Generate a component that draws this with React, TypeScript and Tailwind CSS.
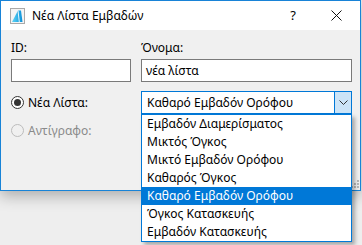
import React from "react";

const opcije = [
  "Εμβαδόν Διαμερίσματος",
  "Μικτός Όγκος",
  "Μικτό Εμβαδόν Ορόφου",
  "Καθαρός Όγκος",
  "Καθαρό Εμβαδόν Ορόφου",
  "Όγκος Κατασκευής",
  "Εμβαδόν Κατασκευής",
];

const selected = 4;

const AppIcon = () => (
  <svg width="15" height="16" viewBox="0 0 15 16">
    <defs>
      <linearGradient id="ic" x1="0" y1="0" x2="1" y2="0">
        <stop offset="0" stopColor="#5fd6f6" />
        <stop offset="1" stopColor="#0a8fd8" />
      </linearGradient>
    </defs>
    <rect x="0.5" y="0.5" width="14" height="15" fill="#f4f4f4" stroke="#a9a9a9" />
    <path d="M2 14 L8 2.5 L11 2.5 L12.5 14 Z" fill="url(#ic)" />
    <path d="M8 2.5 L9.3 14" stroke="#e8f8fd" strokeWidth="1" />
  </svg>
);

const Radio = ({ checked, disabled }: { checked?: boolean; disabled?: boolean }) => (
  <span
    className={`flex h-[13px] w-[13px] items-center justify-center rounded-full border ${
      disabled ? "border-[#bcbcbc] bg-[#f0f0f0]" : "border-[#333] bg-white"
    }`}
  >
    {checked && <span className="h-[7px] w-[7px] rounded-full bg-[#333]" />}
  </span>
);

export default function App() {
  return (
    <div
      className="h-[245px] w-[362px] overflow-hidden bg-[#eeeeee] text-[12px] text-black"
      style={{ fontFamily: '"Noto Sans", "Open Sans", sans-serif' }}
    >
      <div className="relative h-[191px] w-[361px] border border-[#1883d7] bg-[#f0f0f0] shadow-[0_5px_14px_rgba(0,0,0,0.28)]">
        {/* Title bar */}
        <div className="flex h-[29px] items-center bg-white">
          <div className="ml-[9px] mr-[7px] mt-[1px]">
            <AppIcon />
          </div>
          <span className="text-[12px]">Νέα Λίστα Εμβαδών</span>
          <span className="ml-auto mr-[35px] text-[13px]">?</span>
          <svg width="11" height="11" viewBox="0 0 11 11" className="mr-[18px]">
            <path d="M0.5 0.5 L10.5 10.5 M10.5 0.5 L0.5 10.5" stroke="#111" strokeWidth="1" />
          </svg>
        </div>

        {/* Body */}
        <div className="grid grid-cols-[120px_211px] gap-x-[10px] pl-[10px] pt-[10px]">
          <div className="h-[16px] leading-[16px]">ID:</div>
          <div className="h-[16px] leading-[16px]">Όνομα:</div>
          <div className="mt-[3px] h-[23px] border border-[#7a7a7a] bg-white" />
          <div className="mt-[3px] flex h-[23px] items-center border border-[#7a7a7a] bg-white pl-[4px]">
            νέα λίστα
          </div>

          <div className="mt-[9px] flex h-[23px] items-center gap-[4px]">
            <Radio checked />
            <span>Νέα Λίστα:</span>
          </div>
          <div className="relative mt-[9px]">
            <div className="flex h-[23px] border border-[#0078d7] bg-white">
              <span className="flex flex-1 items-center pl-[5px]">Καθαρό Εμβαδόν Ορόφου</span>
              <span className="flex w-[17px] items-center justify-center border-l border-[#0078d7] bg-[#cce4f7]">
                <svg width="9" height="5" viewBox="0 0 9 5">
                  <path d="M0.5 0.5 L4.5 4.5 L8.5 0.5" fill="none" stroke="#333" strokeWidth="1" />
                </svg>
              </span>
            </div>
            {/* Dropdown list */}
            <div className="absolute left-0 top-[23px] z-10 w-[211px] border border-[#0078d7] bg-white shadow-[3px_3px_4px_rgba(0,0,0,0.3)]">
              {opcije.map((o, i) => (
                <div
                  key={o}
                  className={`flex h-[18px] items-center pl-[5px] ${
                    i === selected ? "bg-[#0078d7] text-white" : ""
                  }`}
                >
                  {o}
                </div>
              ))}
            </div>
          </div>

          <div className="mt-[5px] flex h-[23px] items-center gap-[4px] text-[#8a8a8a]">
            <Radio disabled />
            <span>Αντίγραφο:</span>
          </div>
        </div>

        {/* Resize grip */}
        <svg width="8" height="8" viewBox="0 0 8 8" className="absolute bottom-[2px] right-[1px]">
          {[
            [6, 0],
            [3, 3],
            [6, 3],
            [0, 6],
            [3, 6],
            [6, 6],
          ].map(([x, y]) => (
            <rect key={`${x}-${y}`} x={x} y={y} width="2" height="2" fill="#b8b8b8" />
          ))}
        </svg>
      </div>
    </div>
  );
}
